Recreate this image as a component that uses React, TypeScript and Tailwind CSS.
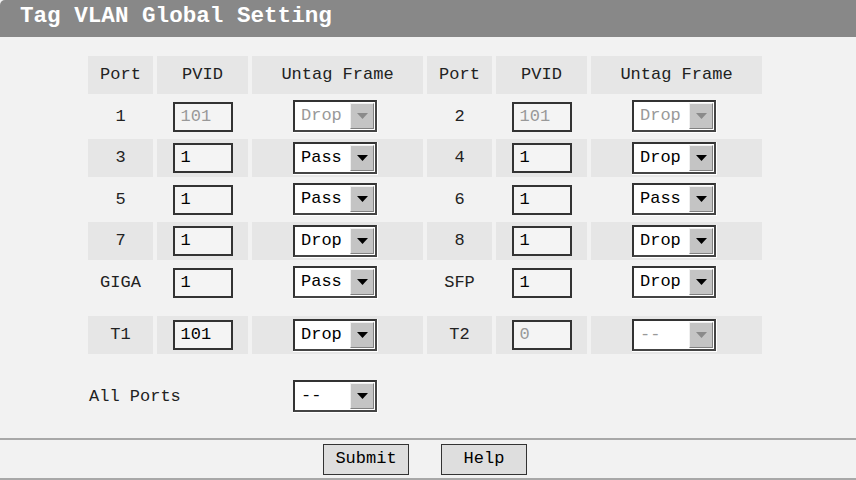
import React from "react";

type Side = { port: string; pvid: string; pvidDis?: boolean; frame: string; frameDis?: boolean };
type Row = { l: Side; r: Side; bg: boolean };

const rows: Row[] = [
  { l: { port: "1", pvid: "101", pvidDis: true, frame: "Drop", frameDis: true }, r: { port: "2", pvid: "101", pvidDis: true, frame: "Drop", frameDis: true }, bg: false },
  { l: { port: "3", pvid: "1", frame: "Pass" }, r: { port: "4", pvid: "1", frame: "Drop" }, bg: true },
  { l: { port: "5", pvid: "1", frame: "Pass" }, r: { port: "6", pvid: "1", frame: "Pass" }, bg: false },
  { l: { port: "7", pvid: "1", frame: "Drop" }, r: { port: "8", pvid: "1", frame: "Drop" }, bg: true },
  { l: { port: "GIGA", pvid: "1", frame: "Pass" }, r: { port: "SFP", pvid: "1", frame: "Drop" }, bg: false },
];
const lastRow: Row = { l: { port: "T1", pvid: "101", frame: "Drop" }, r: { port: "T2", pvid: "0", pvidDis: true, frame: "--", frameDis: true }, bg: true };

function Select({ value, disabled }: { value: string; disabled?: boolean }) {
  return (
    <div className="border-r border-b border-white">
      <div className="w-[84px] h-[32px] flex border-2 border-t-[#333] border-l-[#333] border-r-[#444] border-b-[#444] bg-white">
        <div className={`flex-1 flex items-center pl-[6px] ${disabled ? "text-[#999]" : "text-black"}`}>{value}</div>
        <div className="w-[24px] h-[26px] mt-[1px] mr-[1px] bg-[#c4c4c4] border border-t-[#f0f0f0] border-l-[#f0f0f0] border-r-[#808080] border-b-[#808080] flex items-center justify-center">
          <svg width="11" height="6" viewBox="0 0 11 6">
            <polygon points="0,0 11,0 5.5,6" fill={disabled ? "#8a8a8a" : "#000"} />
          </svg>
        </div>
      </div>
    </div>
  );
}

function Input({ value, disabled }: { value: string; disabled?: boolean }) {
  return (
    <div className={`w-[60px] h-[30px] border-2 border-[#333] bg-[#f4f4f4] flex items-center pl-[6px] ${disabled ? "text-[#999]" : "text-black"}`}>
      {value}
    </div>
  );
}

const cellBg = (bg: boolean) => (bg ? "bg-[#e6e6e6]" : "");

function SideCells({ s, bg }: { s: Side; bg: boolean }) {
  return (
    <>
      <div className={`flex items-center justify-center ${cellBg(bg)}`}>{s.port}</div>
      <div className={`flex items-center justify-center ${cellBg(bg)}`}>
        <Input value={s.pvid} disabled={s.pvidDis} />
      </div>
      <div className={`flex items-center pl-[41px] ${cellBg(bg)}`}>
        <Select value={s.frame} disabled={s.frameDis} />
      </div>
    </>
  );
}

const gridCls = "grid grid-cols-[65px_91px_171px_65px_91px_171px] gap-x-[4px] h-[38px]";

export default function App() {
  return (
    <div
      className="w-[856px] h-[480px] bg-[#f2f2f2] flex flex-col text-[17px] text-[#222]"
      style={{ fontFamily: "'Liberation Mono', 'DejaVu Sans Mono', monospace" }}
    >
      <div className="h-[37px] bg-[#888888] rounded-tl-[5px] flex items-center pl-[20px] pb-[3px] text-white font-bold text-[22.6px] shrink-0">
        Tag VLAN Global Setting
      </div>
      <div className="pl-[88px] pt-[19px] flex flex-col gap-y-[3.5px]">
        <div className={gridCls}>
          {["Port", "PVID", "Untag Frame", "Port", "PVID", "Untag Frame"].map((h, i) => (
            <div key={i} className="flex items-center justify-center bg-[#e6e6e6]">{h}</div>
          ))}
        </div>
        {rows.map((r, i) => (
          <div key={i} className={gridCls}>
            <SideCells s={r.l} bg={r.bg} />
            <SideCells s={r.r} bg={r.bg} />
          </div>
        ))}
        <div className="h-[7.5px]" />
        <div className={gridCls}>
          <SideCells s={lastRow.l} bg={lastRow.bg} />
          <SideCells s={lastRow.r} bg={lastRow.bg} />
        </div>
        <div className="grid grid-cols-[160px_171px] gap-x-[4px] h-[38px] mt-[20px]">
          <div className="flex items-center pl-[1px]">All Ports</div>
          <div className="flex items-center pl-[41px]">
            <Select value="--" />
          </div>
        </div>
      </div>
      <div className="mt-auto h-[42px] border-t-2 border-b-2 border-[#a8a8a8] flex items-center justify-center gap-[32px] pr-[6px] shrink-0">
        <div className="w-[86px] h-[31px] border border-[#333] bg-[#dedede] flex items-center justify-center text-black">Submit</div>
        <div className="w-[86px] h-[31px] border border-[#333] bg-[#dedede] flex items-center justify-center text-black">Help</div>
      </div>
    </div>
  );
}
